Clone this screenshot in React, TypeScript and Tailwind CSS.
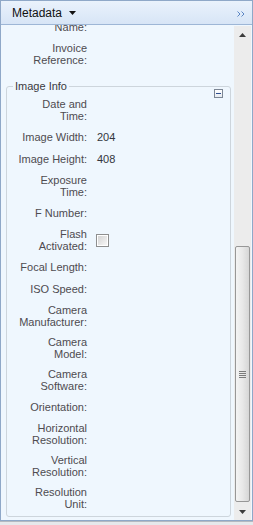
import React from "react";

type Row = { label: string[]; value?: string; check?: boolean };

const topRows: Row[] = [
  { label: ["Name:"] },
  { label: ["Invoice", "Reference:"] },
];

const groupRows: Row[] = [
  { label: ["Date and", "Time:"] },
  { label: ["Image Width:"], value: "204" },
  { label: ["Image Height:"], value: "408" },
  { label: ["Exposure", "Time:"] },
  { label: ["F Number:"] },
  { label: ["Flash", "Activated:"], check: true },
  { label: ["Focal Length:"] },
  { label: ["ISO Speed:"] },
  { label: ["Camera", "Manufacturer:"] },
  { label: ["Camera", "Model:"] },
  { label: ["Camera", "Software:"] },
  { label: ["Orientation:"] },
  { label: ["Horizontal", "Resolution:"] },
  { label: ["Vertical", "Resolution:"] },
  { label: ["Resolution", "Unit:"] },
];

function FieldRow({ row }: { row: Row }) {
  const two = row.label.length > 1;
  return (
    <div className={`flex items-center ${two ? "h-[32px]" : "h-[22px]"}`}>
      <div className="w-[80px] shrink-0 text-right text-[11px] leading-[12px] text-[#4e4b50] whitespace-nowrap">
        {row.label.map((l, i) => (
          <div key={i}>{l}</div>
        ))}
      </div>
      <div className="ml-[10px] flex items-center">
        {row.value && (
          <span className="text-[11px] leading-[12px] text-[#33363d]">{row.value}</span>
        )}
        {row.check && (
          <div className="-ml-[1px] w-[13px] h-[13px] border border-[#8e8f8f] bg-white p-[1px]">
            <div className="w-full h-full bg-gradient-to-br from-[#d4d4d4] to-[#f7f7f7]" />
          </div>
        )}
      </div>
    </div>
  );
}

export default function App() {
  return (
    <div className="w-[253px] h-[525px] bg-[#e6e8eb] font-['Liberation_Sans',Arial,sans-serif] overflow-hidden">
      <div className="w-[253px] h-[521px] border border-[#8fa8c8] flex flex-col bg-[#eff7fe]">
        {/* Header */}
        <div className="h-[24px] shrink-0 border-b border-[#9db6d6] bg-gradient-to-b from-[#eaf2fc] to-[#d7e5f6] flex items-center pl-[11px] pr-[6px]">
          <span className="text-[12px] leading-[14px] text-[#111]">Metadata</span>
          <svg width="7" height="4" viewBox="0 0 7 4" className="ml-[7px] mt-[1px]">
            <path d="M0 0 H7 L3.5 4 Z" fill="#111" />
          </svg>
          <div className="flex-1" />
          <svg width="8" height="6" viewBox="0 0 8 6" className="mt-[2px] mr-[1px]">
            <path d="M0.5 0.5 L3 3 L0.5 5.5 M4.5 0.5 L7 3 L4.5 5.5" stroke="#5b85c3" strokeWidth="1" fill="none" />
          </svg>
        </div>

        {/* Body */}
        <div className="flex-1 flex min-h-0">
          <div className="flex-1 overflow-hidden">
            <div className="-mt-[9px] ml-[5px] mr-[3px]">
              <div className="px-[1px]">
                {topRows.map((r, i) => (
                  <FieldRow key={i} row={r} />
                ))}
              </div>
              <fieldset className="relative mt-[10px] border border-[#cdd5dc] rounded-[3px] pb-[2px]">
                <legend className="ml-[6px] px-[2px] text-[11px] leading-[13px] text-[#3a3a40]">
                  Image Info
                </legend>
                <div className="absolute top-[-4px] right-[7px] w-[9px] h-[9px] border border-[#7c8694] bg-gradient-to-b from-white to-[#e6ebf1] flex items-center justify-center">
                  <div className="w-[5px] h-[1px] bg-[#2f4f8f]" />
                </div>
                <div className="pt-[1px]">
                  {groupRows.map((r, i) => (
                    <FieldRow key={i} row={r} />
                  ))}
                </div>
              </fieldset>
            </div>
          </div>

          {/* Scrollbar */}
          <div className="w-[17px] shrink-0 mt-[1px] mr-[1px] bg-[#ececec] flex flex-col">
            <div className="h-[17px] flex items-center justify-center">
              <svg width="7" height="4" viewBox="0 0 7 4">
                <path d="M3.5 0 L7 4 H0 Z" fill="#3c3c3c" />
              </svg>
            </div>
            <div className="flex-1 relative px-[1px] flex flex-col">
              <div className="h-[203px]" />
              <div className="h-[256px] rounded-[2px] border border-[#979797] bg-gradient-to-r from-[#f4f4f4] via-[#e8e8e8] to-[#d6d6d6] flex items-center justify-center">
                <div className="flex flex-col gap-[1px]">
                  <div className="w-[7px] h-[1px] bg-[#7a7a7a]" />
                  <div className="w-[7px] h-[1px] bg-[#7a7a7a]" />
                  <div className="w-[7px] h-[1px] bg-[#7a7a7a]" />
                  <div className="w-[7px] h-[1px] bg-[#7a7a7a]" />
                </div>
              </div>
            </div>
            <div className="h-[17px] flex items-center justify-center">
              <svg width="7" height="4" viewBox="0 0 7 4">
                <path d="M0 0 H7 L3.5 4 Z" fill="#3c3c3c" />
              </svg>
            </div>
          </div>
        </div>
      </div>
      <div className="h-[1px] bg-[#b4b9c0]" />
    </div>
  );
}
